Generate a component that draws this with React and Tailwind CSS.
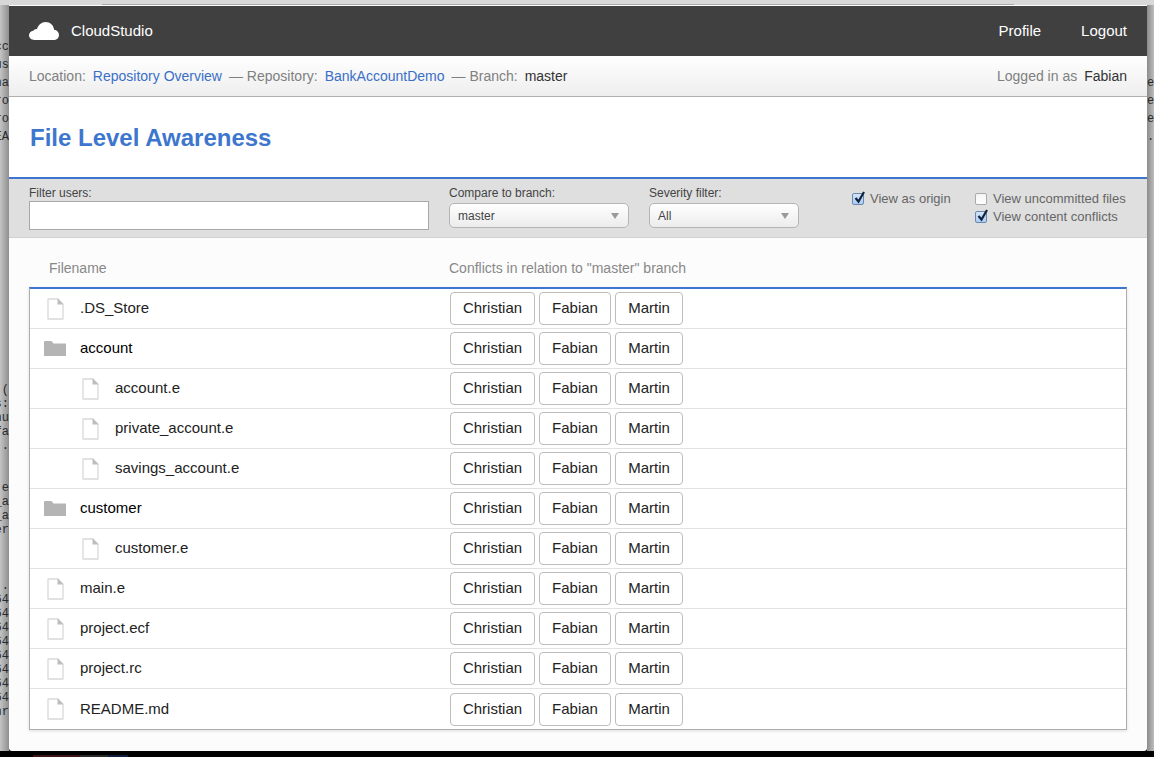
const FILES = [
  { name: '.DS_Store', kind: 'file' },
  { name: 'account', kind: 'folder' },
  { name: 'account.e', kind: 'nested' },
  { name: 'private_account.e', kind: 'nested' },
  { name: 'savings_account.e', kind: 'nested' },
  { name: 'customer', kind: 'folder' },
  { name: 'customer.e', kind: 'nested' },
  { name: 'main.e', kind: 'file' },
  { name: 'project.ecf', kind: 'file' },
  { name: 'project.rc', kind: 'file' },
  { name: 'README.md', kind: 'file' },
]

// terminal window peeking out behind the dialog
const LEFT_TEXT = ['cc', 'us', 'na', 'ro', 'ro', 'EA']
const LEFT_TEXT_LOW = [
  '(', 's:', 'nu', 'fa', '..', '\u00a0', '\u00a0', '.e', '_a', '_a', 'er', '\u00a0', '\u00a0', '\u00a0', '.',
  '64', '64', '64', '64', '64', '64', '64', '64', 'nr',
]
const RIGHT_TEXT = ['er', 'er', 'er']

function CloudLogo() {
  return (
    <svg width="30" height="18" viewBox="0 0 30 18" className="shrink-0">
      <path
        fill="#fff"
        d="M5.5 18C2.4 18 0 15.9 0 13.3c0-2.3 1.8-4.2 4.3-4.6C5 7.5 6.4 6.8 8 6.9 9.3 2.9 12.5 0 16.5 0c4.6 0 8.2 3.4 8.6 7.7 2.8.3 4.9 2.5 4.9 5.2 0 2.9-2.4 5.1-5.4 5.1z"
      />
    </svg>
  )
}

function FileIcon() {
  return (
    <svg width="17" height="22" viewBox="0 0 17 22" className="shrink-0">
      <path d="M1 1h10l5 5v15H1z" fill="#fff" stroke="#d9d9d9" strokeWidth="1.3" strokeLinejoin="round" />
      <path d="M10.5 .5 16.5 6.5h-6z" fill="#bdbdbd" />
    </svg>
  )
}

function FolderIcon() {
  return (
    <svg width="22" height="15" viewBox="0 0 22 15" className="shrink-0">
      <path d="M0 1.2C0 .5.5 0 1.200 0h6.300l2 2.500H22V15H0z" fill="#b4b4b4" />
    </svg>
  )
}

function Caret() {
  return (
    <svg width="8" height="6" viewBox="0 0 8 6" className="shrink-0">
      <path d="M0 0h8L4 6z" fill="#999" />
    </svg>
  )
}

function Select({ value, className }) {
  return (
    <div
      className={
        'flex h-[25px] items-center justify-between rounded-[5px] border border-[#b5b5b5] bg-gradient-to-b from-white to-[#ececec] pl-[8px] pr-[9px] text-[12px] text-[#444] ' +
        className
      }
    >
      <span>{value}</span>
      <Caret />
    </div>
  )
}

function Checkbox({ checked }) {
  if (!checked) {
    return (
      <span className="h-[12px] w-[12px] shrink-0 rounded-[2px] border border-[#aaa] bg-gradient-to-b from-[#f4f4f4] to-white" />
    )
  }
  return (
    <span className="relative h-[12px] w-[12px] shrink-0 rounded-[2px] border border-[#6c88ad] bg-gradient-to-b from-[#d3e5f9] to-[#a9cdf3]">
      <svg width="13" height="14" viewBox="0 0 13 14" className="absolute left-0 top-[-4px]">
        <path d="M2.500 8 5.500 11.500 11 2" fill="none" stroke="#12233f" strokeWidth="2.200" />
      </svg>
    </span>
  )
}

function CheckOption({ checked, label }) {
  return (
    <div className="flex h-[18px] items-center gap-[6px] whitespace-nowrap text-[13px] text-[#666]">
      <Checkbox checked={checked} />
      <span>{label}</span>
    </div>
  )
}

function UserButton({ name, className }) {
  return (
    <button
      type="button"
      className={
        'flex h-[33px] items-center justify-center rounded-[4px] border border-[#bdbdbd] bg-white text-[15px] text-[#222] ' +
        className
      }
    >
      {name}
    </button>
  )
}

function FileRow({ file, last }) {
  const isFolder = file.kind === 'folder'
  return (
    <div className={'flex h-[40px] items-center ' + (last ? 'h-[39px]' : 'border-b border-[#e2e2e2]')}>
      <div className="flex w-[420px] shrink-0 items-center">
        {file.kind === 'file' && (
          <div className="flex w-[50px] pl-[17px]">
            <FileIcon />
          </div>
        )}
        {file.kind === 'folder' && (
          <div className="flex w-[50px] pl-[14px]">
            <FolderIcon />
          </div>
        )}
        {file.kind === 'nested' && (
          <div className="flex w-[85px] pl-[52px]">
            <FileIcon />
          </div>
        )}
        <span className={'text-[15px] ' + (isFolder ? 'text-black' : 'text-[#222]')}>{file.name}</span>
      </div>
      <div className="flex gap-[4px]">
        <UserButton name="Christian" className="w-[85px]" />
        <UserButton name="Fabian" className="w-[72px]" />
        <UserButton name="Martin" className="w-[68px]" />
      </div>
    </div>
  )
}

export default function App() {
  return (
    <div className="flex h-[757px] w-[1154px] flex-col overflow-hidden bg-black font-['Liberation_Sans',Arial,sans-serif]">
      {/* browser chrome behind the dialog */}
      <div className="flex h-[5px] shrink-0 bg-[#d8d8d8] pl-[102px] pr-[140px]">
        <div className="h-[1px] flex-1 self-end bg-[#a8a8a8]" />
      </div>

      <div className="flex h-[746px] shrink-0">
        <div className="flex w-[9px] shrink-0 flex-col overflow-hidden bg-gradient-to-r from-[#c4c4c4] to-[#8f8f8f] pt-[33px] font-['Liberation_Mono',monospace] text-[12px] text-[#2a2a2a]">
          {LEFT_TEXT.map((line, i) => (
            <div key={i} className="flex h-[18px] shrink-0 items-center justify-end whitespace-nowrap">
              {line}
            </div>
          ))}
          <div className="mt-[237px] flex flex-col">
            {LEFT_TEXT_LOW.map((line, i) => (
              <div key={i} className="flex h-[14px] shrink-0 items-center justify-end whitespace-nowrap">
                {line}
              </div>
            ))}
          </div>
        </div>

        {/* dialog */}
        <div className="flex w-[1138px] shrink-0 flex-col overflow-hidden rounded-b-[3px] bg-[#fcfcfc]">
          <div className="mt-[1px] flex h-[50px] shrink-0 items-center justify-between bg-[#404040] pl-[20px] pr-[20px] text-[15px] text-white">
            <div className="flex items-center gap-[12px]">
              <CloudLogo />
              <span>CloudStudio</span>
            </div>
            <div className="flex gap-[40px]">
              <span>Profile</span>
              <span>Logout</span>
            </div>
          </div>

          <div className="flex h-[41px] shrink-0 items-center justify-between border-b border-[#b0b0b0] bg-gradient-to-b from-white to-[#eeeeee] px-[20px] text-[14px] text-[#808080]">
            <div className="flex items-center">
              <span>Location:</span>
              <span className="ml-[7px] text-[#3a6fc8]">Repository Overview</span>
              <span className="ml-[7px]">— Repository:</span>
              <span className="ml-[7px] text-[#3a6fc8]">BankAccountDemo</span>
              <span className="ml-[7px]">— Branch:</span>
              <span className="ml-[7px] text-[#333]">master</span>
            </div>
            <div className="flex items-center">
              <span>Logged in as</span>
              <span className="ml-[7px] text-[#333]">Fabian</span>
            </div>
          </div>

          <div className="flex h-[82px] shrink-0 items-center border-b-2 border-[#3d76cf] bg-white px-[21px] pt-[1px]">
            <h1 className="text-[24px] font-bold text-[#3d76cf]">File Level Awareness</h1>
          </div>

          <div className="flex h-[59px] shrink-0 border-b border-[#d2d2d2] bg-[#dfdfdf] px-[20px] pt-[7px]">
            <div className="w-[420px] shrink-0">
              <div className="h-[15px] text-[12px] leading-[15px] text-[#444]">Filter users:</div>
              <div className="h-[29px] w-[400px] border border-[#a8a8a8] bg-white" />
            </div>
            <div className="w-[200px] shrink-0">
              <div className="mb-[2px] h-[15px] text-[12px] leading-[15px] text-[#444]">Compare to branch:</div>
              <Select value="master" className="w-[180px]" />
            </div>
            <div className="w-[203px] shrink-0">
              <div className="mb-[2px] h-[15px] text-[12px] leading-[15px] text-[#444]">Severity filter:</div>
              <Select value="All" className="w-[150px]" />
            </div>
            <div className="mt-[4px] w-[123px] shrink-0">
              <CheckOption checked label="View as origin" />
            </div>
            <div className="mt-[4px] flex flex-col">
              <CheckOption label="View uncommitted files" />
              <CheckOption checked label="View content conflicts" />
            </div>
          </div>

          <div className="flex h-[49px] shrink-0 items-center px-[40px] pt-[11px] text-[14px] text-[#888]">
            <span className="w-[400px]">Filename</span>
            <span>Conflicts in relation to "master" branch</span>
          </div>

          <div className="mx-[20px] border-x border-b border-t-2 border-[#adadad] border-t-[#3d76cf] bg-white shadow-[0_1px_3px_rgba(0,0,0,0.12)]">
            {FILES.map((file, i) => (
              <FileRow key={file.name} file={file} last={i === FILES.length - 1} />
            ))}
          </div>
        </div>

        <div className="flex w-[7px] shrink-0 flex-col overflow-hidden bg-gradient-to-r from-[#8c8c8c] to-[#bdbdbd] pt-[69px] font-['Liberation_Mono',monospace] text-[12px] text-[#2a2a2a]">
          {RIGHT_TEXT.map((line, i) => (
            <div key={i} className="h-[18px] shrink-0 whitespace-nowrap leading-[18px]">
              {line}
            </div>
          ))}
          <div className="h-[18px] shrink-0 whitespace-nowrap leading-[18px]">..</div>
        </div>
      </div>

      {/* dark strip along the bottom edge */}
      <div className="flex h-[6px] shrink-0 items-end">
        <div className="ml-[33px] h-[2px] w-[47px] bg-[#3c1414]" />
        <div className="h-[2px] w-[28px] bg-[#2a2a2a]" />
        <div className="h-[2px] w-[20px] bg-[#101d3c]" />
      </div>
    </div>
  )
}
